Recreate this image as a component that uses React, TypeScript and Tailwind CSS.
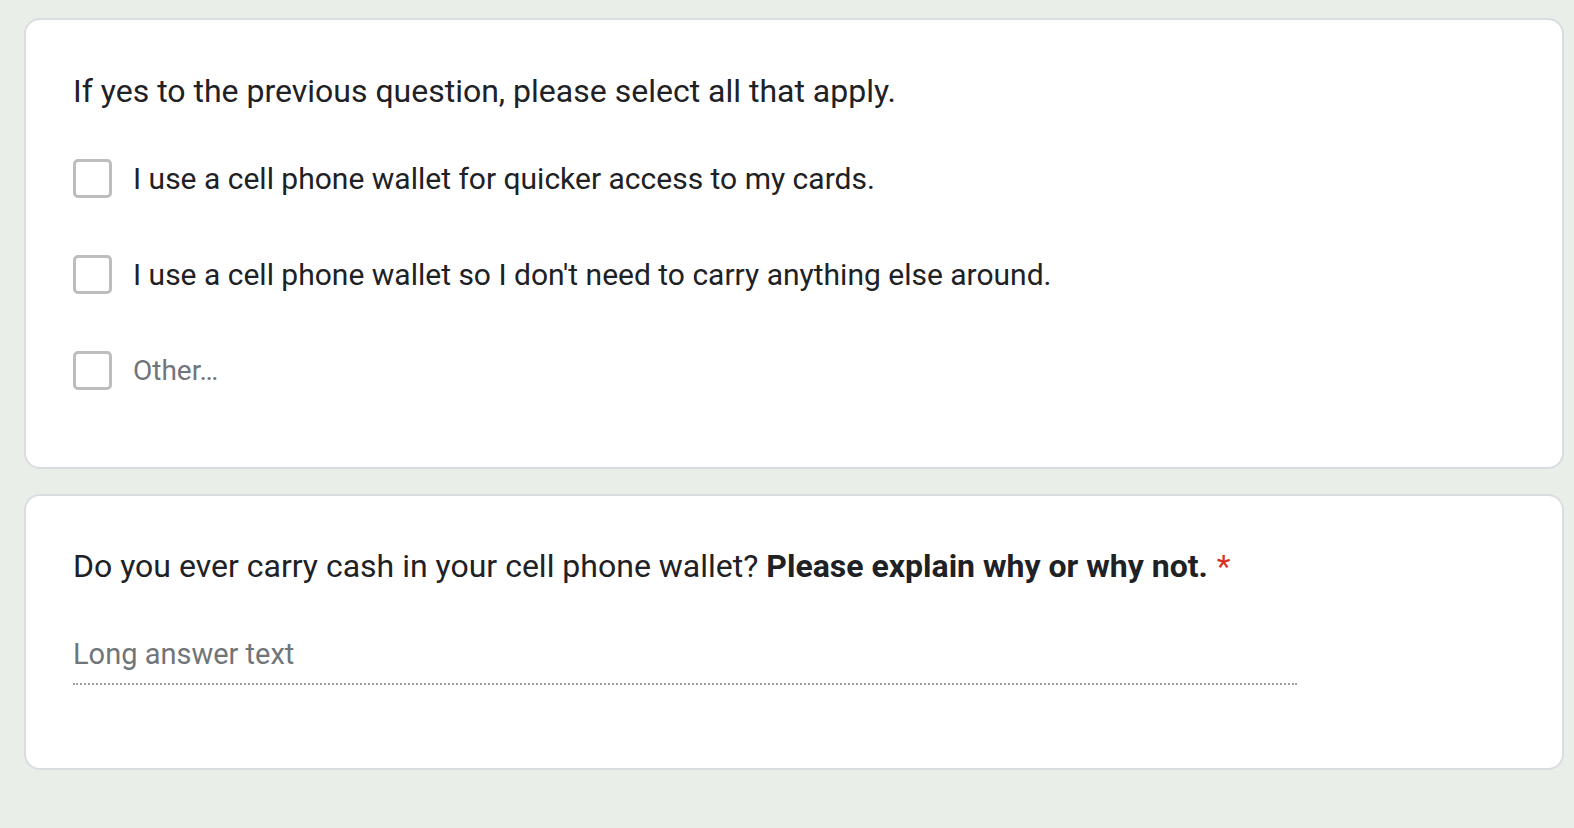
import React, { FC } from "react";

const Checkbox: FC = () => (
  <div className="w-[39px] h-[39px] shrink-0 rounded-[5px] border-[3px] border-[#bdbdbd]" />
);

interface OptionProps {
  label: string;
  muted?: boolean;
}

const Option: FC<OptionProps> = ({ label, muted }) => (
  <div className="flex items-center gap-[21px] h-[39px]">
    <Checkbox />
    <span className={muted ? "text-[28px] text-[#70757a]" : "text-[30px] text-[#202124]"}>
      {label}
    </span>
  </div>
);

export default function App() {
  return (
    <div
      className="min-h-screen w-full bg-[#e9efe8] pt-[18px] pl-[24px] pr-[12px] flex flex-col gap-[25px]"
      style={{ fontFamily: "Roboto, 'Noto Sans', sans-serif" }}
    >
      <div className="w-[1540px] h-[451px] bg-white border-2 border-[#dadce0] rounded-[16px] pl-[47px] pt-[51px]">
        <h2 className="text-[32px] text-[#202124] leading-[40px]">
          If yes to the previous question, please select all that apply.
        </h2>
        <div className="flex flex-col gap-[57px] mt-[48px]">
          <Option label="I use a cell phone wallet for quicker access to my cards." />
          <Option label="I use a cell phone wallet so I don't need to carry anything else around." />
          <Option label="Other…" muted />
        </div>
      </div>

      <div className="w-[1540px] h-[276px] bg-white border-2 border-[#dadce0] rounded-[16px] pl-[47px] pt-[50px]">
        <h2 className="text-[32px] text-[#202124] leading-[40px]">
          Do you ever carry cash in your cell phone wallet?{" "}
          <span className="font-bold">Please explain why or why not.</span>
          <span className="text-[#d93025] ml-[9px]">*</span>
        </h2>
        <div className="mt-[50px] w-[1224px] border-b-2 border-dotted border-[#9aa0a6] pb-[11px]">
          <span className="block text-[29px] leading-[36px] text-[#70757a]">Long answer text</span>
        </div>
      </div>
    </div>
  );
}
